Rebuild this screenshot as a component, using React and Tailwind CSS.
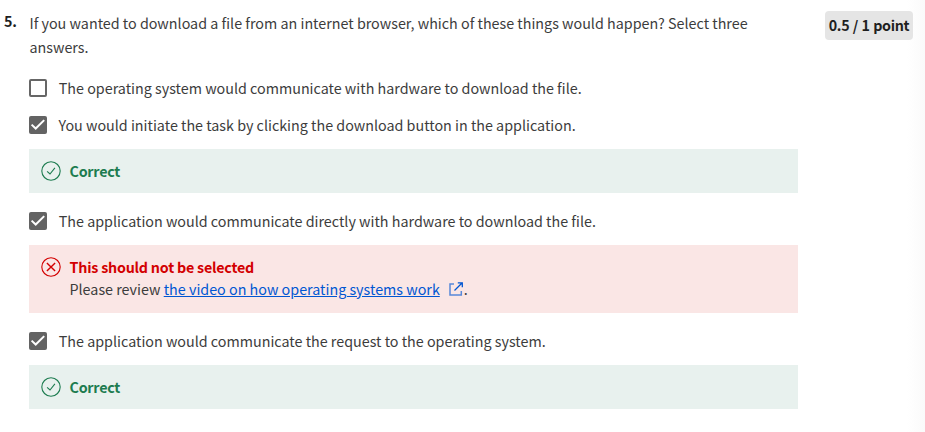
const body = "text-[14.32px] leading-6 whitespace-nowrap font-normal";

function Checkbox({ checked }) {
  if (!checked) {
    return <span className="h-[18px] w-[18px] shrink-0 rounded-[2px] border-2 border-[#666666] bg-white" />;
  }
  return (
    <svg className="h-[18px] w-[18px] shrink-0" viewBox="0 0 18 18" fill="none">
      <rect width="18" height="18" rx="2" fill="#636363" />
      <path d="M2.6 8.6 6.7 12.5 15.2 4.1" stroke="#fff" strokeWidth="2" />
    </svg>
  );
}

function Option({ checked, className, textClass, children }) {
  return (
    <div className={`flex h-6 items-center ${className}`}>
      <Checkbox checked={checked} />
      <span className={`${body} ${textClass}`}>{children}</span>
    </div>
  );
}

function StatusIcon({ ok }) {
  return (
    <svg className="mt-3 h-5 w-5 shrink-0" viewBox="0 0 20 20" fill="none" stroke="currentColor" strokeWidth="1.1">
      <circle cx="10" cy="10" r="9.2" />
      {ok ? <path d="M6.1 10.3 9 13 13.9 6.9" /> : <path d="M5.9 5.9 14.1 14.1M14.1 5.9 5.9 14.1" strokeWidth="1.4" />}
    </svg>
  );
}

function Correct({ className }) {
  return (
    <div className={`flex h-11 bg-[#e8f1ee] pl-3 text-[#1d7c50] ${className}`}>
      <StatusIcon ok />
      <span className="ml-[8.5px] text-[14.3px] leading-[44px] font-bold tracking-[-0.24px]">Correct</span>
    </div>
  );
}

export default function App() {
  return (
    <div className="flex h-[432px] w-[925px] overflow-hidden bg-white bg-linear-to-r from-white from-98% to-[#fafafa] font-['Noto_Sans_CJK_SC',sans-serif] text-[#3c3c3c]">
      <div className="w-[29px] shrink-0 pt-[9px] pl-1 text-[14.3px] leading-6 font-bold tracking-[-0.24px] text-[#1f1f1f]">5.</div>
      <main className="w-[769px] shrink-0 pt-[11px]">
        <div className={`pl-[0.5px] ${body}`}>
          <p>If you wanted to download a file from an internet browser, which of these things would happen? Select three</p>
          <p>answers.</p>
        </div>
        <Option className="mt-[17px]" textClass="ml-[11.8px]">The operating system would communicate with hardware to download the file.</Option>
        <Option checked className="mt-[13px]" textClass="ml-[11.5px]">You would initiate the task by clicking the download button in the application.</Option>
        <Correct className="mt-3" />
        <Option checked className="mt-4" textClass="ml-[11.8px]">The application would communicate directly with hardware to download the file.</Option>
        <div className="mt-3 flex h-[68px] bg-[#fae6e5] pl-3 text-[#d30001]">
          <StatusIcon />
          <div className="ml-[8.5px] pt-[11px]">
            <p className="text-[14.3px] leading-[22px] font-bold tracking-[-0.22px]">This should not be selected</p>
            <p className="flex text-[14.32px] leading-[22px] whitespace-pre text-[#3c3c3c]">
              <span>Please review </span>
              <a className="text-[#0056d2] underline">the video on how operating systems work</a>
              <svg className="mt-[4px] ml-[9px] h-[14px] w-[14px]" viewBox="0 0 14 14" fill="none" stroke="#0056d2">
                <path d="M5 1.9H1V13h11.3V9" strokeWidth="1.5" strokeOpacity=".65" />
                <path d="M5.5 8.5 13 1M8.8.8h4.5v4.5" strokeWidth="1.3" />
              </svg>
              <span className="ml-px">.</span>
            </p>
          </div>
        </div>
        <Option checked className="mt-4" textClass="ml-[11.8px]">The application would communicate the request to the operating system.</Option>
        <Correct className="mt-3" />
      </main>
      <aside className="ml-[27px] mt-[11px] flex h-[29px] w-[88px] items-center justify-center rounded-[4px] bg-[#e5e5e5] pb-[2px] text-[14.3px] font-bold tracking-[-0.32px] [word-spacing:0.6px] whitespace-nowrap text-[#1f1f1f]">
        0.5 / 1 point
      </aside>
    </div>
  );
}
